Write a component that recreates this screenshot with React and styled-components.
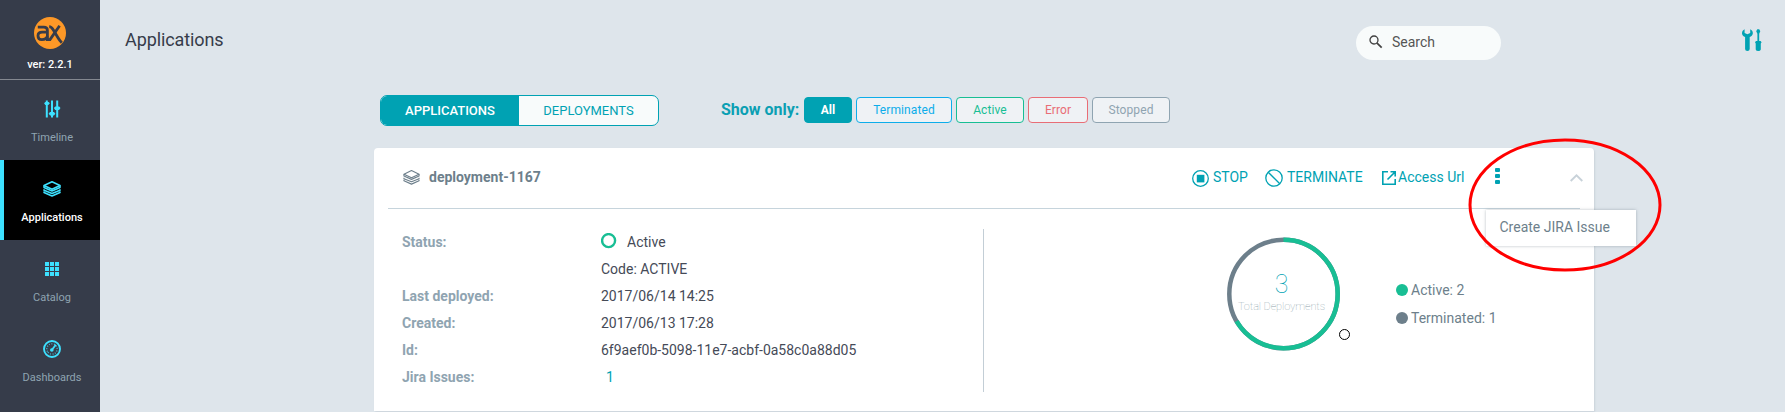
import React from 'react';
import styled, { createGlobalStyle } from 'styled-components';

const GlobalStyle = createGlobalStyle`
  *, *::before, *::after { box-sizing: border-box; }
  body { margin: 0; overflow: hidden; font-family: Roboto, "Liberation Sans", sans-serif; background: #dee5eb; }
  svg { display: block; flex: none; }
`;

const Page = styled.div`
  display: flex;
  height: 412px;
  overflow: hidden;
  background: #dee5eb;
  color: #363c4a;
`;

const Sidebar = styled.nav`
  width: 100px;
  flex: none;
  background: #363c4a;
`;

const Brand = styled.div`
  display: flex;
  flex-direction: column;
  align-items: center;
  height: 80px;
  padding-top: 17px;
  border-bottom: 1px solid #848890;
`;

const Version = styled.div`
  margin-top: 8px;
  font-size: 11px;
  line-height: 16px;
  font-weight: 500;
  color: #fff;
`;

const NavItem = styled.a`
  display: flex;
  flex-direction: column;
  align-items: center;
  height: 80px;
  padding-top: 20px;
  border-left: 4px solid ${(p) => (p.$active ? '#3de1ff' : 'transparent')};
  background: ${(p) => (p.$active ? '#000' : 'transparent')};
  color: ${(p) => (p.$active ? '#fff' : '#8fa4b1')};
  font-size: 11px;
  line-height: 16px;
  font-weight: ${(p) => (p.$active ? 500 : 400)};
  svg { color: #3de1ff; margin-bottom: 12px; }
`;

const Main = styled.main`
  flex: 1;
  min-width: 0;
`;

const TopBar = styled.header`
  display: flex;
  height: 95px;
  padding: 26px 23px 0 25px;
`;

const Title = styled.h1`
  flex: 1;
  margin: 2px 0 0;
  font-size: 18px;
  line-height: 24px;
  font-weight: 400;
  letter-spacing: -0.1px;
`;

const SearchBox = styled.div`
  display: flex;
  align-items: center;
  gap: 9px;
  width: 145px;
  height: 34px;
  margin-right: 241px;
  padding: 0 0 2px 13px;
  border-radius: 17px;
  background: #f8fbfb;
  color: #555;
  font-size: 14px;
`;

const Toolbar = styled.div`
  display: flex;
  align-items: flex-start;
  height: 53px;
  padding-left: 280px;
`;

const Tabs = styled.div`
  display: flex;
  width: 279px;
  height: 31px;
  border: 1px solid #00a2b3;
  border-radius: 7px;
  background: #f8fbfb;
  overflow: hidden;
`;

const Tab = styled.button`
  width: ${(p) => (p.$active ? 138 : 139)}px;
  padding: 0;
  border: 0;
  font: ${(p) => (p.$active ? 500 : 400)} 13px/29px Roboto, sans-serif;
  background: ${(p) => (p.$active ? '#00a2b3' : 'transparent')};
  color: ${(p) => (p.$active ? '#fff' : '#00a2b3')};
`;

const FilterLabel = styled.span`
  width: 83px;
  margin-left: 62px;
  font-size: 16px;
  line-height: 30px;
  font-weight: 700;
  white-space: nowrap;
  color: #0b9fb3;
`;

const Filters = styled.div`
  display: flex;
  gap: 4px;
  padding-top: 2px;
`;

const Filter = styled.button`
  width: ${(p) => p.$width}px;
  height: 26px;
  padding: 0;
  border: 1px solid ${(p) => p.$color};
  border-radius: 4px;
  background: ${(p) => (p.$active ? p.$color : '#eff2f5')};
  color: ${(p) => (p.$active ? '#fff' : p.$color)};
  font: ${(p) => (p.$active ? 700 : 400)} 12px/24px Roboto, sans-serif;
  letter-spacing: 0.1px;
`;

const Card = styled.section`
  width: 1220px;
  height: 263px;
  margin-left: 274px;
  padding: 0 14px;
  border-radius: 4px 4px 0 0;
  background: #fff;
  box-shadow: 1px 1px 2px #cbd3da;
`;

const CardHeader = styled.div`
  display: flex;
  align-items: center;
  height: 61px;
  padding: 0 0 2px 15px;
  border-bottom: 1px solid #c6d4dc;
  color: #6d7f8b;
`;

const CardTitle = styled.h2`
  flex: 1;
  margin: 0 0 0 9px;
  font-size: 14px;
  line-height: 20px;
  font-weight: 700;
`;

const Action = styled.button`
  display: flex;
  align-items: center;
  gap: ${(p) => p.$gap}px;
  width: ${(p) => p.$width}px;
  padding: 0;
  border: 0;
  background: none;
  white-space: nowrap;
  color: #00a2b3;
  font: 400 14px/20px Roboto, sans-serif;
  svg { margin-top: 2px; }
`;

const MenuAnchor = styled.div`
  position: relative;
  width: 75px;
  height: 16px;
  margin-top: -2px;
  color: #00a2b3;
`;

const Menu = styled.div`
  position: absolute;
  top: 42px;
  left: -9px;
  z-index: 1;
  width: 150px;
  height: 36px;
  padding-left: 13.5px;
  background: #fff;
  box-shadow: 0 0 3px rgba(60, 80, 95, 0.35);
  color: #6d7f8b;
  font-size: 14px;
  line-height: 34px;
  white-space: nowrap;
`;

const Highlight = styled.svg`
  position: absolute;
  top: -30px;
  left: -28px;
  z-index: 2;
`;

const CardBody = styled.div`
  display: flex;
  padding-top: 20px;
`;

const Details = styled.dl`
  display: grid;
  grid-template-columns: 199px 1fr;
  grid-auto-rows: 27px;
  width: 596px;
  height: 163px;
  margin: 0;
  padding-left: 14px;
  border-right: 1px solid #c3ced6;
  font-size: 14px;
  line-height: 27px;
`;

const Term = styled.dt`
  color: #8fa4b1;
  font-weight: 700;
`;

const Value = styled.dd`
  display: flex;
  margin: 0;
  color: ${(p) => (p.$link ? '#00a2b3' : '#454a57')};
  padding-left: ${(p) => (p.$link ? 5 : 0)}px;
`;

const StatusIcon = styled.svg`
  margin: 4px 10px 0 0;
`;

const StatusRing = () => (
  <StatusIcon width="16" height="16" viewBox="0 0 16 16">
    <circle cx="7.6" cy="7.6" r="6.5" fill="none" stroke="#18be94" strokeWidth="2.4" />
  </StatusIcon>
);

const Summary = styled.div`
  display: flex;
  padding: 8px 0 0 243px;
`;

const Chart = styled.div`
  position: relative;
  width: 113px;
  height: 114px;
`;

const ChartLabel = styled.div`
  position: absolute;
  top: 34px;
  left: 0;
  width: 109px;
  text-align: center;
  color: #8d9fab;
  font-size: 11px;
  line-height: 15px;
  font-weight: 100;
  letter-spacing: -0.1px;
  white-space: nowrap;
`;

const Total = styled.div`
  color: #00a2b3;
  font-size: 25px;
  line-height: 28px;
`;

const Marker = styled.span`
  position: absolute;
  top: 92px;
  left: 112px;
  width: 11px;
  height: 11px;
  border: 1px solid #000;
  border-radius: 50%;
`;

const Legend = styled.div`
  margin: 39px 0 0 56px;
`;

const LegendItem = styled.div`
  display: flex;
  align-items: center;
  gap: 3px;
  height: 28px;
  font-size: 14px;
  color: #6d7f8b;
  &::before {
    content: '';
    width: 12px;
    height: 12px;
    border-radius: 50%;
    background: ${(p) => p.$color};
  }
`;

const Logo = () => (
  <svg width="32" height="32" viewBox="0 0 32 32">
    <circle cx="16" cy="16" r="16" fill="#fd9827" />
    <g fill="none" stroke="#363c4a" strokeWidth="2.8">
      <path d="M3.8 10.2H9.8C12.6 10.2 13.4 11.2 13.4 13.4V22.6H16L25.6 8.8" />
      <path d="M13 15.2H8.2C4.8 15.2 4 16.6 4 18.8C4 21.4 5 22.7 7.8 22.7C10.6 22.7 12.8 21.4 13.4 19.2" />
      <path d="M15.2 9.6C17.4 9.6 18 10.8 19.2 12.8L24 20.8C25.2 22.8 26 24 27.8 25.8" />
    </g>
  </svg>
);

const Sliders = () => (
  <svg width="18" height="18" viewBox="0 0 18 18" fill="currentColor">
    <path d="M2.8.5h2V2h.8l1.3 1.3L5.3 5h-.5v12.5h-2V5h-.5L1.1 3.3 2.3 2h.5zM8 .5h2V12h1l1.4 1.7-1.5 1.8H10v2H8v-2h-.9l-1.5-1.8L7 12h1zM13.2.5h2v6h1l1.3 1.6-1.4 1.8h-.9v7.6h-2V9.9h-1l-1.3-1.8 1.4-1.6h.9z" />
  </svg>
);

const Layers = ({ size, stroke }) => (
  <svg width={size} height={size} viewBox="0 0 18 18" fill="none" stroke="currentColor" strokeWidth={stroke} strokeLinejoin="round">
    <path d="M9 1.7L17 5.5L9 9.3L1 5.5Z" />
    <path d="M1 5.5V7.5L9 11L17 7.5V5.5M1 9.3V10.3L9 13.5L17 10.3V9.3M1 11.5V12.5L9 16L17 12.5V11.5" />
  </svg>
);

const Grid = () => (
  <svg width="18" height="18" viewBox="0 0 18 18" fill="currentColor">
    {[2, 7, 12].map((y) => [2, 7, 12].map((x) => (
      <rect key={`${x}-${y}`} x={x} y={y} width="4" height="4" />
    )))}
  </svg>
);

const Gauge = () => (
  <svg width="18" height="18" viewBox="0 0 18 18" fill="none" stroke="currentColor">
    <circle cx="9" cy="9" r="8" strokeWidth="1.9" />
    <circle cx="9" cy="9" r="5.2" strokeWidth="1.3" strokeDasharray="1 1.6" pathLength="33" transform="rotate(150 9 9)" opacity=".8" />
    <path d="M8.8 10L12.8 4.8" strokeWidth="1.8" />
    <circle cx="8.8" cy="10" r="1.8" fill="currentColor" stroke="none" />
  </svg>
);

const SearchIcon = () => (
  <svg width="14" height="14" viewBox="0 0 14 14" fill="none" stroke="#414141">
    <circle cx="5" cy="5" r="4" strokeWidth="1.3" />
    <path d="M7.8 7.8L12.7 12.7" strokeWidth="1.7" />
  </svg>
);

const ToolsButton = styled.span`
  padding-top: 3px;
`;

const Tools = () => (
  <svg width="20" height="22" viewBox="0 0 20 22" fill="#00a2b3">
    <path d="M2.6.3V3.9L5.4 5.2L8.2 3.9V.3C10 1.2 11 2.7 10.8 4.4C10.6 6 9.3 7.3 7.7 7.9V20Q7.7 22 5.4 22Q3.1 22 3.1 20V7.9C1.4 7.3.2 6 0 4.4C-.1 2.7.9 1.2 2.6.3Z" />
    <path d="M15.3.3H17.2L18.3 2.3L17.2 4.8V12H18.6L19.6 13.2L18.8 14.4V20.4Q18.4 22 16.3 22Q14.1 22 13.7 20.4V14.4L13 13.2L14 12H15.4V4.8L14.2 2.3Z" />
  </svg>
);

const StopIcon = () => (
  <svg width="17" height="17" viewBox="0 0 17 17">
    <circle cx="8.5" cy="8.5" r="7.8" fill="none" stroke="currentColor" strokeWidth="1.3" />
    <rect x="4.8" y="4.8" width="7.6" height="7.6" fill="currentColor" />
  </svg>
);

const Ban = () => (
  <svg width="18" height="18" viewBox="0 0 18 18" fill="none" stroke="currentColor" strokeWidth="1.3">
    <circle cx="9" cy="9" r="8.2" />
    <path d="M3.2 3.2L14.8 14.8" />
  </svg>
);

const External = () => (
  <svg width="14" height="14" viewBox="0 0 14 14" fill="none" stroke="currentColor" strokeWidth="1.6">
    <path d="M6 .8H.8V13.2H13.2V8M8.5 .8H13.2V5.5M13 1L5.5 8.5" />
  </svg>
);

const Dots = () => (
  <svg width="5" height="16" viewBox="0 0 5 16" fill="currentColor">
    <rect width="5" height="4" rx="1" />
    <rect y="6" width="5" height="4" rx="1" />
    <rect y="12" width="5" height="4" rx="1" />
  </svg>
);

const ChevronIcon = styled.svg`
  margin: 2px -3px 0 0;
`;

const Chevron = () => (
  <ChevronIcon width="13" height="8" viewBox="0 0 13 8" fill="none" stroke="#c8d2d9" strokeWidth="1.9">
    <path d="M.7 7L6.5 1.4L12.3 7" />
  </ChevronIcon>
);

const Donut = () => (
  <svg width="113" height="114" viewBox="0 0 113 114" fill="none" strokeWidth="4.5">
    <circle cx="56.5" cy="57" r="54.2" stroke="#6d7f8b" />
    <circle cx="56.5" cy="57" r="54.2" stroke="#18be94" pathLength="3" strokeDasharray="2 1" transform="rotate(-90 56.5 57)" />
  </svg>
);

const navItems = [
  { label: 'Timeline', icon: <Sliders /> },
  { label: 'Applications', icon: <Layers size={18} stroke={1.5} />, active: true },
  { label: 'Catalog', icon: <Grid /> },
  { label: 'Dashboards', icon: <Gauge /> },
];

const filters = [
  { label: 'All', width: 48, color: '#00a2b3', active: true },
  { label: 'Terminated', width: 96, color: '#0dadea' },
  { label: 'Active', width: 68, color: '#18be94' },
  { label: 'Error', width: 60, color: '#e96d76' },
  { label: 'Stopped', width: 78, color: '#8fa4b1' },
];

export default function App() {
  return (
    <Page>
      <GlobalStyle />
      <Sidebar>
        <Brand>
          <Logo />
          <Version>ver: 2.2.1</Version>
        </Brand>
        {navItems.map((item) => (
          <NavItem key={item.label} $active={item.active}>
            {item.icon}
            {item.label}
          </NavItem>
        ))}
      </Sidebar>
      <Main>
        <TopBar>
          <Title>Applications</Title>
          <SearchBox><SearchIcon />Search</SearchBox>
          <ToolsButton><Tools /></ToolsButton>
        </TopBar>
        <Toolbar>
          <Tabs>
            <Tab $active>APPLICATIONS</Tab>
            <Tab>DEPLOYMENTS</Tab>
          </Tabs>
          <FilterLabel>Show only:</FilterLabel>
          <Filters>
            {filters.map((f) => (
              <Filter key={f.label} $width={f.width} $color={f.color} $active={f.active}>{f.label}</Filter>
            ))}
          </Filters>
        </Toolbar>
        <Card>
          <CardHeader>
            <Layers size={17} stroke={1.2} />
            <CardTitle>deployment-1167</CardTitle>
            <Action $gap={4} $width={73}><StopIcon />STOP</Action>
            <Action $gap={4} $width={117}><Ban />TERMINATE</Action>
            <Action $gap={2} $width={113}><External />Access Url</Action>
            <MenuAnchor>
              <Dots />
              <Menu>Create JIRA Issue</Menu>
              <Highlight width="196" height="136" viewBox="0 0 196 136" fill="none">
                <ellipse cx="98" cy="67" rx="95" ry="65" stroke="#f00" strokeWidth="3" />
              </Highlight>
            </MenuAnchor>
            <Chevron />
          </CardHeader>
          <CardBody>
            <Details>
              <Term>Status:</Term>
              <Value><StatusRing />Active</Value>
              <Term />
              <Value>Code: ACTIVE</Value>
              <Term>Last deployed:</Term>
              <Value>2017/06/14 14:25</Value>
              <Term>Created:</Term>
              <Value>2017/06/13 17:28</Value>
              <Term>Id:</Term>
              <Value>6f9aef0b-5098-11e7-acbf-0a58c0a88d05</Value>
              <Term>Jira Issues:</Term>
              <Value $link>1</Value>
            </Details>
            <Summary>
              <Chart>
                <Donut />
                <ChartLabel>
                  <Total>3</Total>
                  Total Deployments
                </ChartLabel>
                <Marker />
              </Chart>
              <Legend>
                <LegendItem $color="#18be94">Active: 2</LegendItem>
                <LegendItem $color="#6d7f8b">Terminated: 1</LegendItem>
              </Legend>
            </Summary>
          </CardBody>
        </Card>
      </Main>
    </Page>
  );
}
